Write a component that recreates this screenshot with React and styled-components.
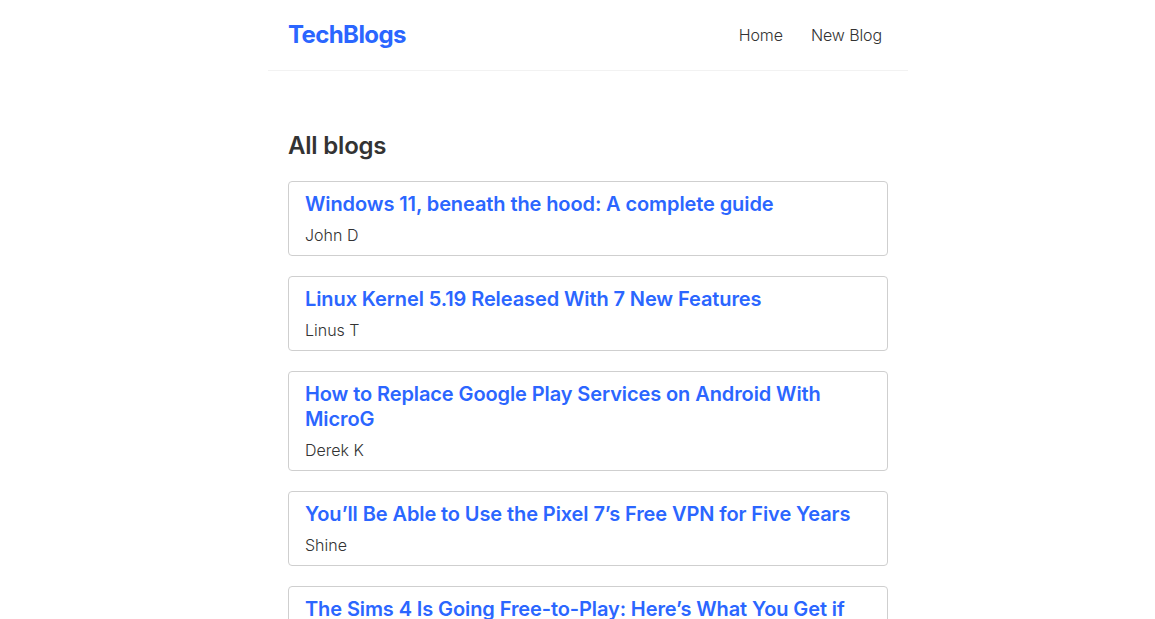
import React from "react";
import styled, { createGlobalStyle } from "styled-components";

const GlobalStyle = createGlobalStyle`
  html { scrollbar-width: none; }
  html::-webkit-scrollbar { display: none; }
  * { margin: 0; box-sizing: border-box; }
  body {
    margin: 0;
    background: #fff;
    color: #333;
    font-family: Inter, "Noto Sans", sans-serif;
  }
`;

const Page = styled.div`
  padding-left: 21px;
`;

const Navbar = styled.nav`
  max-width: 640px;
  margin: 0 auto;
  padding: 20px;
  display: flex;
  align-items: center;
  border-bottom: 1px solid #f2f2f2;
`;

const Logo = styled.h1`
  font-size: 24px;
  line-height: 30px;
  font-weight: 700;
  letter-spacing: -0.6px;
  color: #2b66ff;
`;

const Links = styled.div`
  margin-left: auto;
  display: flex;
  align-items: center;
`;

const NavLink = styled.a`
  margin-left: 16px;
  padding: 6px;
  font-size: 16px;
  line-height: 18px;
  font-weight: 300;
  color: #333;
  text-decoration: none;
  letter-spacing: -0.1px;
`;

const Content = styled.main`
  max-width: 640px;
  margin: 40px auto;
  padding: 20px;
`;

const Heading = styled.h2`
  font-size: 24px;
  line-height: 30px;
  font-weight: 600;
  color: #333;
  letter-spacing: -0.2px;
`;

const Card = styled.div`
  margin: 20px 0;
  padding: 10px 16px;
  border: 1px solid #cfcfcf;
  border-radius: 4px;
`;

const Title = styled.h2`
  font-size: 20px;
  line-height: 25px;
  font-weight: 600;
  color: #2b66ff;
  letter-spacing: -0.1px;
  margin-bottom: 8px;
`;

const Author = styled.p`
  font-size: 16px;
  line-height: 20px;
  font-weight: 300;
  color: #333;
`;

const blogs = [
  { id: 1, title: "Windows 11, beneath the hood: A complete guide", author: "John D" },
  { id: 2, title: "Linux Kernel 5.19 Released With 7 New Features", author: "Linus T" },
  { id: 3, title: "How to Replace Google Play Services on Android With MicroG", author: "Derek K" },
  { id: 4, title: "You’ll Be Able to Use the Pixel 7’s Free VPN for Five Years", author: "Shine" },
  { id: 5, title: "The Sims 4 Is Going Free-to-Play: Here’s What You Get if You Already Own It", author: "Mario S" },
];

export default function App() {
  return (
    <Page>
      <GlobalStyle />
      <Navbar>
        <Logo>TechBlogs</Logo>
        <Links>
          <NavLink href="#">Home</NavLink>
          <NavLink href="#">New Blog</NavLink>
        </Links>
      </Navbar>
      <Content>
        <Heading>All blogs</Heading>
        {blogs.map((b) => (
          <Card key={b.id}>
            <Title>{b.title}</Title>
            <Author>{b.author}</Author>
          </Card>
        ))}
      </Content>
    </Page>
  );
}
